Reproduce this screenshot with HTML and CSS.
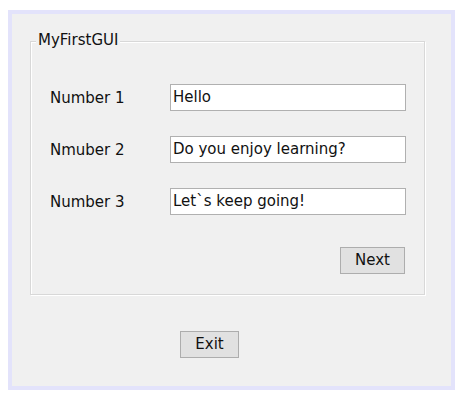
FILE: index.html
```html
<!DOCTYPE html>
<html>
<head>
<meta charset="utf-8">
<link rel="stylesheet" href="styles.css">
</head>
<body>
<div class="window">
  <div class="group">
    <span class="group-title">MyFirstGUI</span>
    <div class="form">
      <label class="lbl">Number 1</label>
      <div class="field">Hello</div>
      <label class="lbl">Nmuber 2</label>
      <div class="field">Do you enjoy learning?</div>
      <label class="lbl">Number 3</label>
      <div class="field">Let`s keep going!</div>
    </div>
    <div class="actions">
      <button class="btn btn-next">Next</button>
    </div>
  </div>
  <div class="footer">
    <button class="btn btn-exit">Exit</button>
  </div>
</div>
</body>
</html>
```

FILE: styles.css
```css
html, body {
  margin: 0;
  padding: 0;
  background: #ffffff;
}
body {
  font-family: "DejaVu Sans", "Liberation Sans", sans-serif;
  font-size: 15px;
  color: #111;
}
.window {
  box-sizing: border-box;
  margin: 10px 0 0 8px;
  width: 447px;
  height: 380px;
  border: 4px solid #e3e3fb;
  background: #f0f0f0;
  padding: 27px 0 0 18px;
}
.group {
  position: relative;
  box-sizing: border-box;
  width: 395px;
  height: 254px;
  border: 1px solid #d8d8d8;
  box-shadow: inset 1px 1px 0 #ffffff, 1px 1px 0 #ffffff;
  padding: 42px 0 0 19px;
}
.group-title {
  position: absolute;
  left: 5px;
  top: -11px;
  padding: 0 2px;
  background: #f0f0f0;
  line-height: 18px;
}
.form {
  display: grid;
  grid-template-columns: 120px 236px;
  grid-auto-rows: 27px;
  row-gap: 25px;
  align-items: center;
}
.lbl {
  line-height: 18px;
}
.field {
  box-sizing: border-box;
  height: 27px;
  border: 1px solid #b0b0b0;
  background: #ffffff;
  padding: 0 2px;
  line-height: 25px;
  white-space: nowrap;
}
.actions {
  display: flex;
  justify-content: flex-end;
  width: 355px;
  margin-top: 32px;
}
.btn {
  box-sizing: border-box;
  height: 27px;
  border: 1px solid #adadad;
  background: #e1e1e1;
  font-family: "DejaVu Sans", "Liberation Sans", sans-serif;
  font-size: 15px;
  color: #111;
  padding: 0;
  line-height: 25px;
}
.btn-next {
  width: 65px;
}
.footer {
  padding: 36px 0 0 150px;
}
.btn-exit {
  width: 59px;
}
```
